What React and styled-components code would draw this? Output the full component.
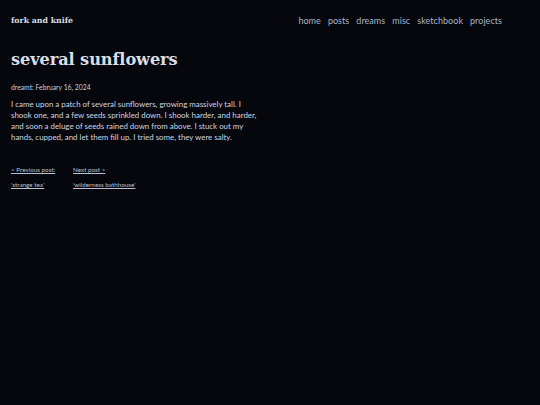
import React from "react";
import styled, { createGlobalStyle } from "styled-components";

const Global = createGlobalStyle`
  html, body { margin: 0; padding: 0; background: #05070c; }
  body { font-family: Lato, "Open Sans", sans-serif; color: #cfd6e2; }
`;

const Page = styled.div`
  width: 540px;
  height: 405px;
  box-sizing: border-box;
  padding: 15px 11px 0 11px;
  background: #05070c;
`;

const Header = styled.header`
  display: flex;
  align-items: center;
  justify-content: space-between;
  padding-right: 27px;
`;

const SiteTitle = styled.a`
  font-family: "DejaVu Serif", serif;
  font-weight: bold;
  font-size: 7.8px;
  color: #d8dee9;
  text-decoration: none;
`;

const Nav = styled.nav`
  display: flex;
  gap: 7px;
`;

const NavLink = styled.a`
  font-size: 9px;
  color: #a9b3c6;
  text-decoration: none;
  letter-spacing: 0.05px;
`;

const Title = styled.h1`
  font-family: "DejaVu Serif", serif;
  font-weight: bold;
  font-size: 16.2px;
  color: #d8dee9;
  margin: 24px 0 0 0;
  letter-spacing: -0.1px;
`;

const Meta = styled.div`
  font-size: 6.8px;
  margin-top: 14px;
  color: #c8cfdb;
`;

const Body = styled.p`
  width: 252px;
  font-size: 7.9px;
  line-height: 11px;
  margin: 8px 0 0 0;
  color: #cfd6e2;
`;

const PostNav = styled.div`
  display: grid;
  grid-template-columns: 62px auto;
  row-gap: 8px;
  margin-top: 23px;
  width: 200px;
`;

const PostLink = styled.a`
  font-size: 6.3px;
  color: #b7c0d0;
  text-decoration: underline;
`;

export default function App() {
  return (
    <>
      <Global />
      <Page>
        <Header>
          <SiteTitle>fork and knife</SiteTitle>
          <Nav>
            {["home", "posts", "dreams", "misc", "sketchbook", "projects"].map((n) => (
              <NavLink key={n}>{n}</NavLink>
            ))}
          </Nav>
        </Header>
        <Title>several sunflowers</Title>
        <Meta>dreamt: February 16, 2024</Meta>
        <Body>
          I came upon a patch of several sunflowers, growing massively tall. I shook one, and a few
          seeds sprinkled down. I shook harder, and harder, and soon a deluge of seeds rained down
          from above. I stuck out my hands, cupped, and let them fill up. I tried some, they were
          salty.
        </Body>
        <PostNav>
          <PostLink>&lt; Previous post:</PostLink>
          <PostLink>Next post &gt;</PostLink>
          <PostLink>'strange tea'</PostLink>
          <PostLink>'wilderness bathhouse'</PostLink>
        </PostNav>
      </Page>
    </>
  );
}
